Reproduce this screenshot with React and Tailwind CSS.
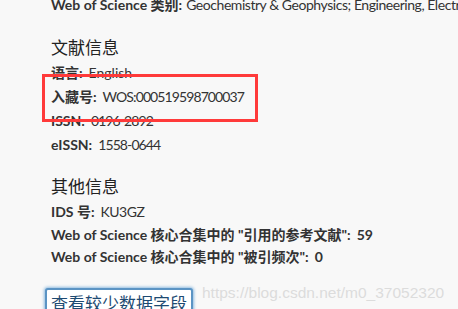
export default function App() {
  const font = { fontFamily: "Lato, 'Noto Sans CJK SC', sans-serif" };
  const Row = ({ label, value, h = "h-[24px]", vcls = "text-[14px] tracking-[-0.9px]" }) => (
    <div className={`${h} flex items-center text-[14px] text-[#333] whitespace-nowrap`}>
      <span className="font-bold">{label}</span>
      <span className={`ml-[6px] ${vcls}`}>{value}</span>
    </div>
  );
  return (
    <div className="relative w-[458px] h-[309px] overflow-hidden bg-[#f8f8f8]" style={font}>
      <div className="flex flex-col pl-[51px] -mt-[7px]">
        <div className="h-[23px] flex items-center text-[14px] text-[#333] whitespace-nowrap">
          <span className="font-bold">Web of Science 类别:</span>
          <span className="ml-[4px] tracking-[-0.45px]">Geochemistry &amp; Geophysics; Engineering, Electrical &amp; Electronic</span>
        </div>
        <div className="mt-[20px] h-[24px] flex items-center text-[17px] text-[#222] whitespace-nowrap">文献信息</div>
        <Row label="语言:" value="English" vcls="text-[14px]" />
        <Row label="入藏号:" value="WOS:000519598700037" />
        <Row label="ISSN:" value="0196-2892" />
        <Row label="eISSN:" value="1558-0644" />
        <div className="mt-[19px] h-[24px] flex items-center text-[17px] text-[#222] whitespace-nowrap">其他信息</div>
        <Row label="IDS 号:" value="KU3GZ" vcls="text-[14px] tracking-[-0.5px]" />
        <Row label={'Web of Science 核心合集中的 "引用的参考文献":'} value={<span className="font-bold">59</span>} h="h-[22px]" vcls="text-[14px]" />
        <Row label={'Web of Science 核心合集中的 "被引频次":'} value={<span className="font-bold">0</span>} h="h-[22px]" vcls="text-[14px]" />
        <div className="mt-[21px] -ml-[6px] flex">
          <button className="h-[34px] px-[4px] rounded-[3px] border-2 border-[#5b94c4] bg-white text-[17px] text-[#1d4a72] shadow-[0_0_3px_1px_#8fbbe0] leading-none flex items-start pt-[5px]">
            查看较少数据字段
          </button>
        </div>
      </div>
      <div className="absolute left-[42px] top-[74px] w-[216px] h-[48px] border-[3px] border-[#ff3a3a]" />
      <div
        className="absolute left-[202px] top-[281px] text-[15.5px] text-[#dcdcdc] whitespace-nowrap"
        style={{ fontFamily: "'Liberation Sans', Arial, sans-serif" }}
      >
        https://blog.csdn.net/m0_37052320
      </div>
    </div>
  );
}
